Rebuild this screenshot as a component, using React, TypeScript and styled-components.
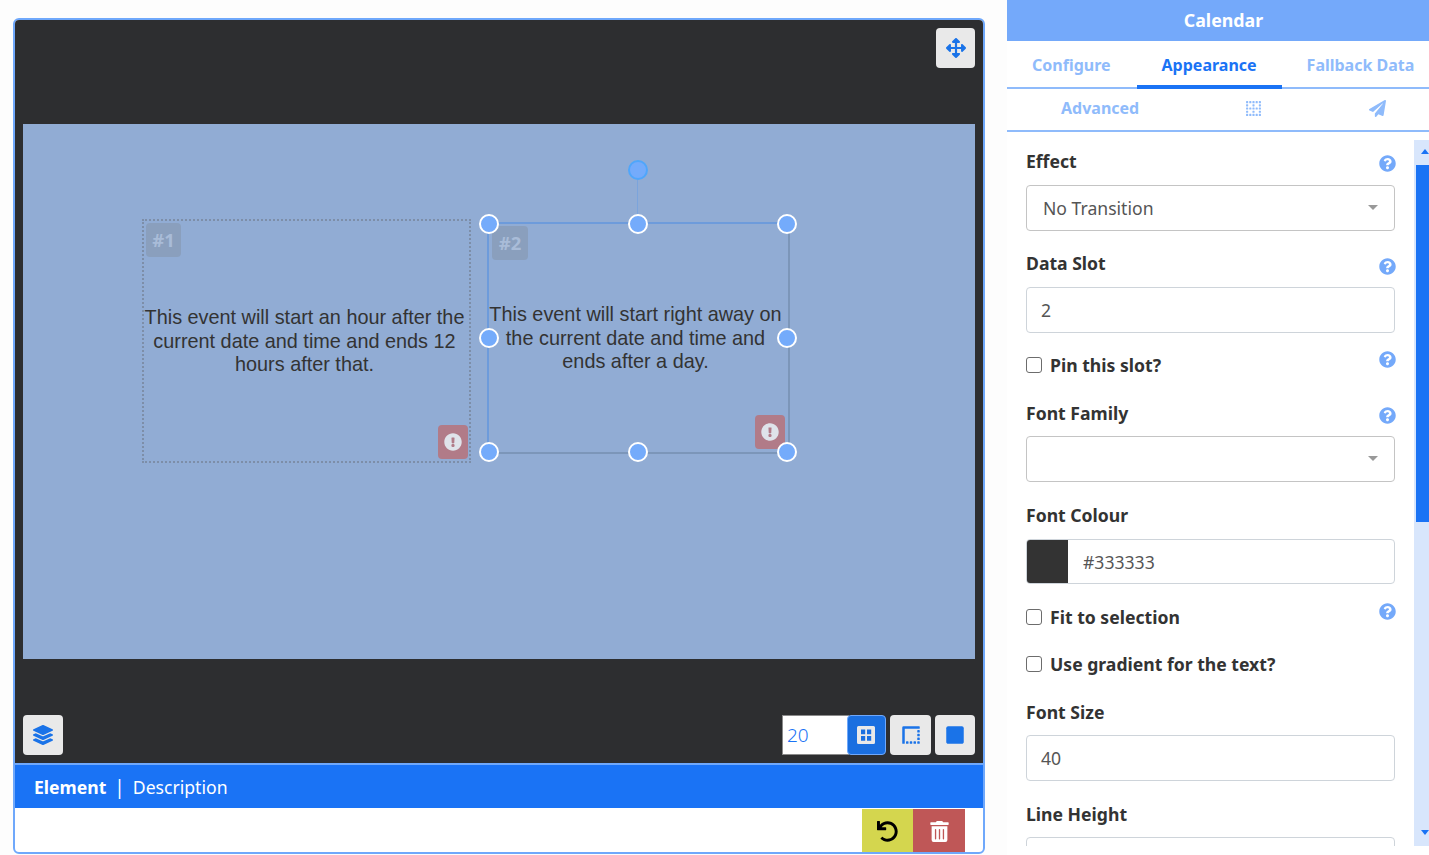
import React from "react";
import styled, { createGlobalStyle } from "styled-components";
import {
  FaArrowsAlt,
  FaBorderNone,
  FaBorderStyle,
  FaExclamationCircle,
  FaLayerGroup,
  FaPaperPlane,
  FaQuestionCircle,
  FaSquare,
  FaTrashAlt,
  FaUndo,
} from "react-icons/fa";

const Global = createGlobalStyle`
  html, body { margin: 0; padding: 0; background: #fdfdfd; }
  body { font-family: "Noto Sans", "Open Sans", sans-serif; color: #333; }
  * { box-sizing: border-box; }
`;

const Page = styled.div`
  display: flex;
  width: 1429px;
  height: 855px;
  overflow: hidden;
`;

const Workspace = styled.main`
  width: 1007px;
  padding: 18px 22px 1px 13px;
`;

const Frame = styled.div`
  display: flex;
  flex-direction: column;
  height: 836px;
  border: 2px solid #6fa8fb;
  border-radius: 6px;
  background: #fff;
  overflow: hidden;
`;

const Stage = styled.div`
  display: flex;
  flex-direction: column;
  flex-shrink: 0;
  height: 743px;
  padding: 8px;
  background: #2d2e30;
`;

const Toolbar = styled.div<{ $between?: boolean }>`
  display: flex;
  align-items: center;
  justify-content: ${(p) => (p.$between ? "space-between" : "flex-end")};
  height: 40px;
`;

const ToolGroup = styled.div`
  display: flex;
  gap: 4px;
`;

const ToolButton = styled.button<{ $w?: number }>`
  display: flex;
  align-items: center;
  justify-content: center;
  width: ${(p) => p.$w ?? 40}px;
  height: 40px;
  padding: 0;
  border: 0;
  border-radius: 4px;
  background: #e9e9e9;
  color: #1a73e8;
  font-size: 20px;
`;

const GridSize = styled.div`
  display: flex;
  height: 40px;
`;

const GridInput = styled.div`
  display: flex;
  align-items: center;
  width: 67px;
  padding-left: 4px;
  border: 1px solid #8a8a8a;
  border-right: 0;
  background: #fff;
  color: #1a73f5;
  font-size: 19px;
  font-weight: 300;
`;

const GridButton = styled.button`
  display: flex;
  align-items: center;
  justify-content: center;
  width: 39px;
  height: 40px;
  margin-left: -2px;
  padding: 0 1px 0 0;
  border: 1px solid #6fa8fb;
  border-radius: 4px;
  background: #1a6fe0;
  color: #e9e9e9;
`;

const Canvas = styled.div`
  position: relative;
  height: 535px;
  margin: 56px 0;
  background: #91acd4;
  font-family: "Liberation Sans", Arial, sans-serif;
`;

const Region = styled.div<{ $x: number; $y: number; $w: number; $h: number }>`
  position: absolute;
  left: ${(p) => p.$x}px;
  top: ${(p) => p.$y}px;
  width: ${(p) => p.$w}px;
  height: ${(p) => p.$h}px;
  display: flex;
  align-items: center;
  justify-content: center;
  text-align: center;
  white-space: nowrap;
  color: #333;
  font-size: 19.85px;
  line-height: 23.8px;
`;

const DottedRegion = styled(Region)`
  border: 2px dotted #7d8ea8;
  padding: 1px 4px 0 0;
`;

const SelectedRegion = styled(Region)`
  border: 2px solid #6d9bdb;
  border-right-color: #7c96b9;
  border-bottom-color: #7c96b9;
  padding: 1px 6px 0 0;
`;

const SlotBadge = styled.span<{ $x: number; $y: number; $w: number }>`
  position: absolute;
  left: ${(p) => p.$x}px;
  top: ${(p) => p.$y}px;
  width: ${(p) => p.$w}px;
  height: 34px;
  border-radius: 4px;
  background: #8a9fbd;
  color: #a9bcd8;
  font-family: "Noto Sans", sans-serif;
  font-size: 18.5px;
  font-weight: 700;
  line-height: 33px;
`;

const AlertBadge = styled.span<{ $x: number; $y: number }>`
  position: absolute;
  left: ${(p) => p.$x}px;
  top: ${(p) => p.$y}px;
  display: flex;
  align-items: center;
  justify-content: center;
  width: 30px;
  height: 34px;
  padding-right: 1px;
  border-radius: 4px;
  background: #b17b88;
  color: #dfe3ea;
  font-size: 18px;
`;

const Handle = styled.span<{ $x: number; $y: number; $rotate?: boolean }>`
  position: absolute;
  left: ${(p) => p.$x}px;
  top: ${(p) => p.$y}px;
  width: 20px;
  height: 20px;
  transform: translate(-50%, -50%);
  border: 2px solid ${(p) => (p.$rotate ? "#4fa6fb" : "#fff")};
  border-radius: 50%;
  background: #74abfb;
`;

const RotateLine = styled.span`
  position: absolute;
  left: 148px;
  top: -44px;
  width: 1px;
  height: 34px;
  background: #7ba4dc;
`;

const Footer = styled.div`
  display: flex;
  flex-shrink: 0;
  align-items: center;
  height: 45px;
  padding: 0 0 0 19px;
  border-top: 2px solid #6fa8fb;
  background: #1a73f5;
  color: #fff;
  font-size: 17.6px;
`;

const FooterStrong = styled.strong`
  font-weight: 700;
`;

const FooterSep = styled.span`
  margin: 0 8px;
  font-size: 19px;
`;

const Actions = styled.div`
  display: flex;
  justify-content: flex-end;
  flex-shrink: 0;
  padding: 1px 18px 0 0;
`;

const ActionButton = styled.button<{ $bg: string; $fg: string; $w: number }>`
  display: flex;
  align-items: center;
  justify-content: center;
  width: ${(p) => p.$w}px;
  height: 44px;
  padding: 1px 0 0;
  border: 0;
  background: ${(p) => p.$bg};
  color: ${(p) => p.$fg};
  font-size: 21px;
`;

const Panel = styled.aside`
  display: flex;
  flex-direction: column;
  width: 422px;
  height: 855px;
  background: #fff;
`;

const PanelTitle = styled.h1`
  height: 41px;
  margin: 0;
  padding: 1px 0 0 11px;
  background: #74a9fa;
  color: #fff;
  font-size: 17.8px;
  font-weight: 700;
  line-height: 38px;
  text-align: center;
`;

const TabRow = styled.nav`
  display: flex;
  height: 48px;
  border-bottom: 2px solid #8fbbfb;
`;

const TabRowSecond = styled(TabRow)`
  gap: 56px;
  height: 43px;
  padding-left: 29px;
`;

const Tab = styled.a<{ $active?: boolean }>`
  display: flex;
  align-items: center;
  justify-content: center;
  height: ${(p) => (p.$active ? "48px" : "auto")};
  margin-left: ${(p) => (p.$active ? "0.5px" : "0")};
  padding: ${(p) => (p.$active ? "4px 25px 0" : "2px 25.5px 0 25px")};
  border-bottom: ${(p) => (p.$active ? "4px solid #1a73f5" : "0")};
  color: ${(p) => (p.$active ? "#1a73f5" : "#8fbbfb")};
  font-size: 16px;
  font-weight: 700;
  white-space: nowrap;
`;

const SecondTab = styled(Tab)`
  padding: 0 25px 3px;
`;

const IconTab = styled(SecondTab)`
  padding-right: 26px;
  font-size: 17px;
`;

const PanelBody = styled.div`
  display: flex;
  height: 714px;
`;

const Form = styled.div`
  flex: 1;
  padding: 17px 19px 0;
  overflow: hidden;
`;

const Track = styled.div`
  position: relative;
  width: 15px;
  margin-top: 8px;
  padding: 25px 0 0 2px;
  background: #d8e6fc;
`;

const Thumb = styled.div`
  height: 357px;
  background: #1a73f5;
`;

const Arrow = styled.span<{ $down?: boolean }>`
  position: absolute;
  right: 0;
  ${(p) => (p.$down ? "bottom: 11px;" : "top: 9px;")}
  width: 0;
  height: 0;
  border-left: 4px solid transparent;
  border-right: 4px solid transparent;
  ${(p) => (p.$down ? "border-top: 5px solid #1a73f5;" : "border-bottom: 5px solid #1a73f5;")}
`;

const FieldBox = styled.div<{ $after: number }>`
  margin-bottom: ${(p) => p.$after}px;
`;

const LabelRow = styled.div<{ $gap: number }>`
  position: relative;
  display: flex;
  height: 24px;
  margin-bottom: ${(p) => p.$gap}px;
`;

const Label = styled.label`
  font-size: 17.6px;
  font-weight: 700;
  line-height: 24px;
  color: #333;
`;

const Help = styled.span<{ $top: number }>`
  position: absolute;
  right: -0.5px;
  top: ${(p) => p.$top}px;
  display: flex;
  color: #74a9fa;
  font-size: 17px;
`;

const CheckRow = styled.div<{ $after: number }>`
  position: relative;
  display: flex;
  align-items: center;
  gap: 8px;
  height: 24px;
  margin-bottom: ${(p) => p.$after}px;
`;

const CheckBox = styled.span`
  width: 16px;
  height: 16px;
  border: 1px solid #6c6c6c;
  border-radius: 3px;
  background: #fff;
`;

const Control = styled.div`
  display: flex;
  align-items: center;
  height: 46px;
  padding: 0 14px;
  border: 1px solid #ced4da;
  border-radius: 4px;
  background: #fff;
  color: #555;
  font-size: 17.6px;
`;

const SelectControl = styled(Control)`
  justify-content: space-between;
  padding: 0 16px;
  border-color: #c4c4c4;
`;

const Caret = styled.span`
  width: 0;
  height: 0;
  margin-bottom: 1px;
  border-left: 5px solid transparent;
  border-right: 5px solid transparent;
  border-top: 5px solid #999;
`;

const ColourControl = styled(Control)`
  height: 45px;
  padding: 0;
  overflow: hidden;
`;

const Swatch = styled.span`
  width: 41px;
  height: 100%;
  background: #333;
`;

const ColourValue = styled.span`
  padding: 1px 0 0 15px;
`;

function GridIcon() {
  return (
    <svg width="18" height="18" viewBox="0 0 18 18" aria-hidden="true">
      <path
        fill="currentColor"
        fillRule="evenodd"
        d="M1.5 0h15A1.5 1.5 0 0 1 18 1.5v15a1.5 1.5 0 0 1-1.5 1.5h-15A1.5 1.5 0 0 1 0 16.5v-15A1.5 1.5 0 0 1 1.5 0ZM4 3.5v4.8h4.2V3.5H4Zm6 0v4.8h4.2V3.5H10ZM4 10v4.7h4.2V10H4Zm6 0v4.7h4.2V10H10Z"
      />
    </svg>
  );
}

type FieldProps = {
  name: string;
  gap?: number;
  after?: number;
  helpTop?: number;
  children: React.ReactNode;
};

function Field({ name, gap = 12, after = 20, helpTop, children }: FieldProps) {
  return (
    <FieldBox $after={after}>
      <LabelRow $gap={gap}>
        <Label>{name}</Label>
        {helpTop !== undefined && (
          <Help $top={helpTop}>
            <FaQuestionCircle />
          </Help>
        )}
      </LabelRow>
      {children}
    </FieldBox>
  );
}

function Check({ name, after, help }: { name: string; after: number; help?: boolean }) {
  return (
    <CheckRow $after={after}>
      <CheckBox />
      <Label>{name}</Label>
      {help && (
        <Help $top={-2}>
          <FaQuestionCircle />
        </Help>
      )}
    </CheckRow>
  );
}

export default function App() {
  return (
    <Page>
      <Global />
      <Workspace>
        <Frame>
          <Stage>
            <Toolbar>
              <ToolButton $w={39}>
                <FaArrowsAlt />
              </ToolButton>
            </Toolbar>
            <Canvas>
              <DottedRegion $x={119} $y={95} $w={329} $h={244}>
                <SlotBadge $x={2} $y={2} $w={35}>#1</SlotBadge>
                <span>
                  This event will start an hour after the
                  <br />
                  current date and time and ends 12
                  <br />
                  hours after that.
                </span>
                <AlertBadge $x={294} $y={204}>
                  <FaExclamationCircle />
                </AlertBadge>
              </DottedRegion>
              <SelectedRegion $x={464} $y={98} $w={303} $h={232}>
                <SlotBadge $x={3} $y={2} $w={36}>#2</SlotBadge>
                <span>
                  This event will start right away on
                  <br />
                  the current date and time and
                  <br />
                  ends after a day.
                </span>
                <AlertBadge $x={266} $y={191}>
                  <FaExclamationCircle />
                </AlertBadge>
                <RotateLine />
                <Handle $x={149} $y={-54} $rotate />
                <Handle $x={0} $y={0} />
                <Handle $x={149} $y={0} />
                <Handle $x={298} $y={0} />
                <Handle $x={0} $y={114} />
                <Handle $x={298} $y={114} />
                <Handle $x={0} $y={228} />
                <Handle $x={149} $y={228} />
                <Handle $x={298} $y={228} />
              </SelectedRegion>
            </Canvas>
            <Toolbar $between>
              <ToolButton>
                <FaLayerGroup />
              </ToolButton>
              <ToolGroup>
                <GridSize>
                  <GridInput>20</GridInput>
                  <GridButton>
                    <GridIcon />
                  </GridButton>
                </GridSize>
                <ToolButton $w={41}>
                  <FaBorderStyle />
                </ToolButton>
                <ToolButton>
                  <FaSquare />
                </ToolButton>
              </ToolGroup>
            </Toolbar>
          </Stage>
          <Footer>
            <FooterStrong>Element</FooterStrong>
            <FooterSep>|</FooterSep>
            <span>Description</span>
          </Footer>
          <Actions>
            <ActionButton $bg="#d4d64e" $fg="#000" $w={51}>
              <FaUndo />
            </ActionButton>
            <ActionButton $bg="#bf5757" $fg="#fff" $w={52}>
              <FaTrashAlt />
            </ActionButton>
          </Actions>
        </Frame>
      </Workspace>
      <Panel>
        <PanelTitle>Calendar</PanelTitle>
        <TabRow>
          <Tab>Configure</Tab>
          <Tab $active>Appearance</Tab>
          <Tab>Fallback Data</Tab>
        </TabRow>
        <TabRowSecond>
          <SecondTab>Advanced</SecondTab>
          <IconTab>
            <FaBorderNone />
          </IconTab>
          <IconTab>
            <FaPaperPlane />
          </IconTab>
        </TabRowSecond>
        <PanelBody>
          <Form>
            <Field name="Effect" helpTop={6}>
              <SelectControl>
                No Transition
                <Caret />
              </SelectControl>
            </Field>
            <Field name="Data Slot" helpTop={7}>
              <Control>2</Control>
            </Field>
            <Check name="Pin this slot?" after={24} help />
            <Field name="Font Family" gap={11} after={21} helpTop={6}>
              <SelectControl>
                &nbsp;
                <Caret />
              </SelectControl>
            </Field>
            <Field name="Font Colour" after={21}>
              <ColourControl>
                <Swatch />
                <ColourValue>#333333</ColourValue>
              </ColourControl>
            </Field>
            <Check name="Fit to selection" after={23} help />
            <Check name="Use gradient for the text?" after={24} />
            <Field name="Font Size" gap={11} after={21}>
              <Control>40</Control>
            </Field>
            <Field name="Line Height" gap={11}>
              <Control />
            </Field>
          </Form>
          <Track>
            <Arrow />
            <Thumb />
            <Arrow $down />
          </Track>
        </PanelBody>
      </Panel>
    </Page>
  );
}
